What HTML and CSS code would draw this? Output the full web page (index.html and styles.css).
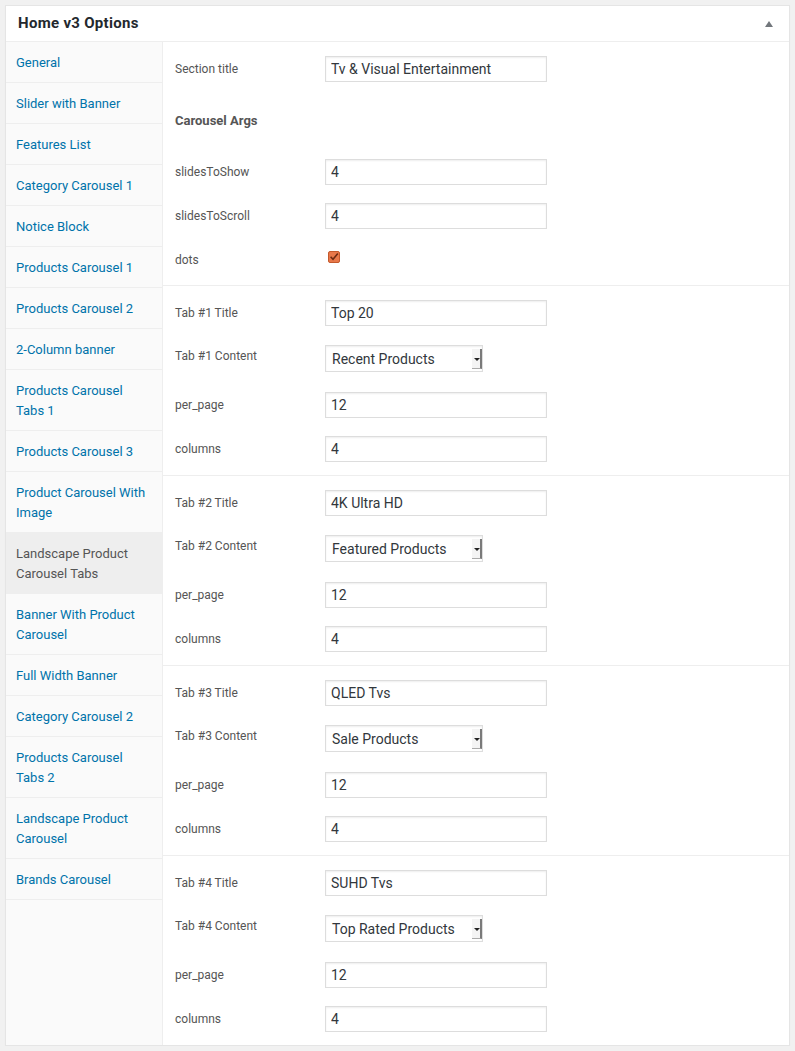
FILE: index.html
```html
<!DOCTYPE html>
<html>
<head>
<meta charset="utf-8">
<link rel="stylesheet" href="styles.css">
</head>
<body>
<div class="panel">
  <div class="panel-head">
    <h2 class="panel-title">Home v3 Options</h2>
    <span class="toggle"></span>
  </div>
  <div class="panel-body">
    <ul class="side">
      <li><a>General</a></li>
      <li><a>Slider with Banner</a></li>
      <li><a>Features List</a></li>
      <li><a>Category Carousel 1</a></li>
      <li><a>Notice Block</a></li>
      <li><a>Products Carousel 1</a></li>
      <li><a>Products Carousel 2</a></li>
      <li><a>2-Column banner</a></li>
      <li><a>Products Carousel Tabs 1</a></li>
      <li><a>Products Carousel 3</a></li>
      <li><a>Product Carousel With Image</a></li>
      <li class="active"><a>Landscape Product Carousel Tabs</a></li>
      <li><a>Banner With Product Carousel</a></li>
      <li><a>Full Width Banner</a></li>
      <li><a>Category Carousel 2</a></li>
      <li><a>Products Carousel Tabs 2</a></li>
      <li><a>Landscape Product Carousel</a></li>
      <li><a>Brands Carousel</a></li>
    </ul>
    <div class="main">
      <div class="group">
        <div class="row"><label class="lbl">Section title</label><input class="txt" type="text" value="Tv &amp; Visual Entertainment"></div>
        <div class="heading">Carousel Args</div>
        <div class="row"><label class="lbl">slidesToShow</label><input class="txt" type="text" value="4"></div>
        <div class="row"><label class="lbl">slidesToScroll</label><input class="txt" type="text" value="4"></div>
        <div class="row chk-row"><label class="lbl">dots</label>
          <span class="check"><svg width="12" height="12" viewBox="0 0 12 12"><rect x="0.5" y="0.5" width="11" height="11" rx="1.5" fill="#e8784a" stroke="#c4592c"/><path d="M2.6 5.8 L5 8.3 L9.8 2.6" fill="none" stroke="#6b2a12" stroke-width="1.6"/></svg></span>
        </div>
      </div>
      <div class="group">
        <div class="row"><label class="lbl">Tab #1 Title</label><input class="txt" type="text" value="Top 20"></div>
        <div class="row sel-row"><label class="lbl">Tab #1 Content</label><div class="sel"><span class="sel-val">Recent Products</span><span class="sel-arrow"></span></div></div>
        <div class="row"><label class="lbl">per_page</label><input class="txt" type="text" value="12"></div>
        <div class="row"><label class="lbl">columns</label><input class="txt" type="text" value="4"></div>
      </div>
      <div class="group">
        <div class="row"><label class="lbl">Tab #2 Title</label><input class="txt" type="text" value="4K Ultra HD"></div>
        <div class="row sel-row"><label class="lbl">Tab #2 Content</label><div class="sel"><span class="sel-val">Featured Products</span><span class="sel-arrow"></span></div></div>
        <div class="row"><label class="lbl">per_page</label><input class="txt" type="text" value="12"></div>
        <div class="row"><label class="lbl">columns</label><input class="txt" type="text" value="4"></div>
      </div>
      <div class="group">
        <div class="row"><label class="lbl">Tab #3 Title</label><input class="txt" type="text" value="QLED Tvs"></div>
        <div class="row sel-row"><label class="lbl">Tab #3 Content</label><div class="sel"><span class="sel-val">Sale Products</span><span class="sel-arrow"></span></div></div>
        <div class="row"><label class="lbl">per_page</label><input class="txt" type="text" value="12"></div>
        <div class="row"><label class="lbl">columns</label><input class="txt" type="text" value="4"></div>
      </div>
      <div class="group">
        <div class="row"><label class="lbl">Tab #4 Title</label><input class="txt" type="text" value="SUHD Tvs"></div>
        <div class="row sel-row"><label class="lbl">Tab #4 Content</label><div class="sel"><span class="sel-val">Top Rated Products</span><span class="sel-arrow"></span></div></div>
        <div class="row"><label class="lbl">per_page</label><input class="txt" type="text" value="12"></div>
        <div class="row"><label class="lbl">columns</label><input class="txt" type="text" value="4"></div>
      </div>
    </div>
  </div>
</div>
</body>
</html>
```
FILE: styles.css
```css
html, body {
  margin: 0;
  padding: 0;
  background: #f1f1f1;
}
body {
  padding: 5px 5px 0 5px;
  font-family: Roboto, "Liberation Sans", sans-serif;
  color: #444;
}
.panel {
  width: 785px;
  box-sizing: border-box;
  background: #fff;
  border: 1px solid #e5e5e5;
  box-shadow: 0 1px 1px rgba(0,0,0,.04);
}
.panel-head {
  height: 35px;
  border-bottom: 1px solid #eee;
  display: flex;
  align-items: center;
  justify-content: space-between;
  padding: 0 12px;
}
.panel-title {
  margin: 0 0 2px;
  font-size: 15px;
  letter-spacing: 0.3px;
  font-weight: 700;
  color: #23282d;
  line-height: 20px;
}
.toggle {
  width: 0;
  height: 0;
  border-left: 4px solid transparent;
  border-right: 4px solid transparent;
  border-bottom: 6px solid #72777c;
  margin-right: 4px;
  margin-top: 0;
}
.panel-body {
  display: flex;
  align-items: stretch;
}
.side {
  list-style: none;
  margin: 0;
  padding: 0;
  width: 156px;
  flex: none;
  background: #fafafa;
  border-right: 1px solid #eee;
}
.side li {
  border-bottom: 1px solid #eee;
  padding: 11px 10px 9px 10px;
  font-size: 13px;
  line-height: 20px;
}
.side li a {
  color: #0073aa;
  display: block;
}
.side li.active {
  background: #eee;
}
.side li.active a {
  color: #555;
}
.main {
  flex: 1;
}
.group {
  padding: 5px 0 4px 12px;
  border-bottom: 1px solid #eee;
}
.group:last-child {
  border-bottom: none;
}
.row {
  display: flex;
  align-items: flex-start;
  padding: 9px 0;
  height: 26px;
}
.chk-row {
  height: 25px;
}
.sel-row {
  padding: 10px 0;
  height: 28px;
}
.lbl {
  width: 150px;
  flex: none;
  font-size: 12px;
  line-height: 20px;
  padding-top: 3px;
  color: #555;
}
.sel-row .lbl {
  padding-top: 1px;
}
.heading {
  font-size: 13px;
  font-weight: 700;
  color: #555;
  line-height: 20px;
  padding: 20px 0 19px;
}
.txt {
  box-sizing: border-box;
  width: 222px;
  height: 26px;
  margin: 0;
  border: 1px solid #ddd;
  box-shadow: inset 0 1px 2px rgba(0,0,0,.07);
  padding: 0 5px;
  font-family: Roboto, "Liberation Sans", sans-serif;
  font-size: 14px;
  color: #32373c;
  background: #fff;
  outline: none;
}
.check {
  display: block;
  padding-top: 4px;
  margin-left: 3px;
  height: 12px;
}
.check svg { display: block; }
.sel {
  position: relative;
  box-sizing: border-box;
  width: 158px;
  height: 27px;
  border: 1px solid #ddd;
  box-shadow: inset 0 1px 2px rgba(0,0,0,.07);
  background: #fff;
  display: flex;
  align-items: center;
  padding-left: 6px;
  font-size: 14px;
  color: #32373c;
}
.sel-arrow {
  position: absolute;
  right: 0;
  top: 3px;
  width: 8px;
  height: 19px;
  border-right: 2px solid #7a7a7a;
  border-bottom: 1px solid #aaa;
  background: #f4f4f4;
}
.sel-arrow::after {
  content: "";
  position: absolute;
  left: 2px;
  top: 9px;
  border-left: 3px solid transparent;
  border-right: 3px solid transparent;
  border-top: 3px solid #222;
}
```
